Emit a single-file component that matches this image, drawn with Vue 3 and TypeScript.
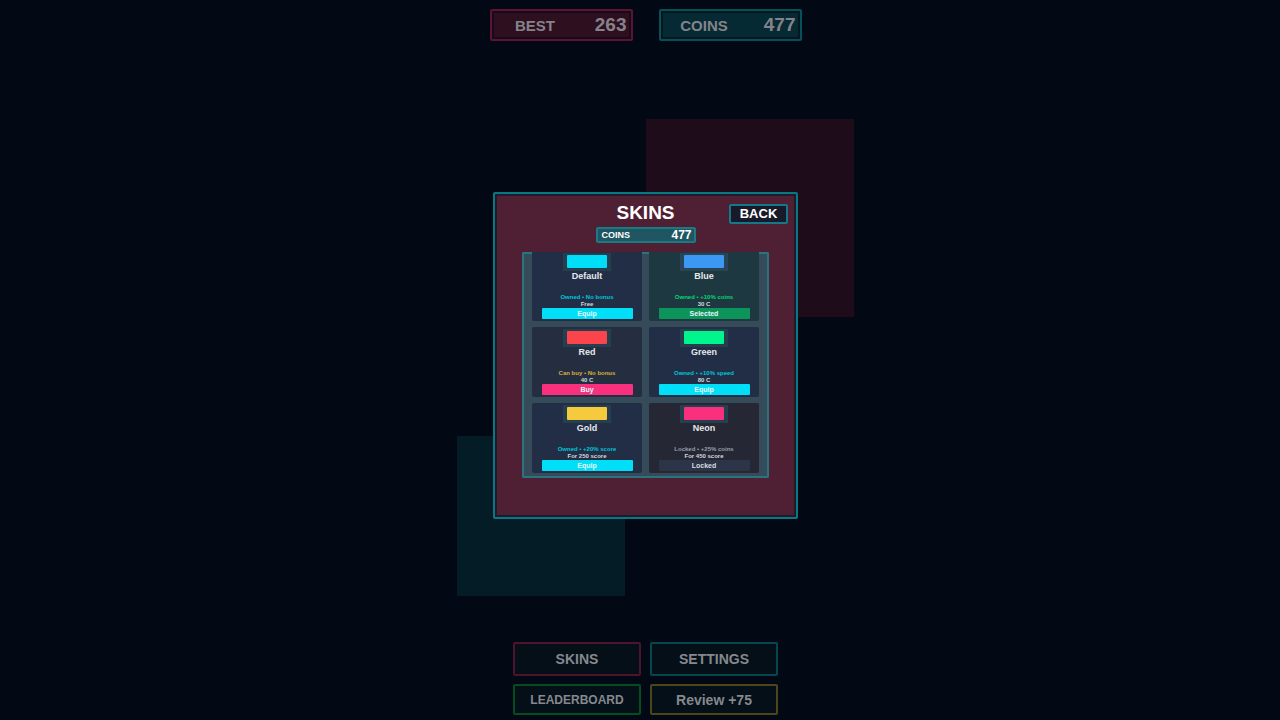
<script setup lang="ts">
interface Skin {
  name: string
  tone: string
  color: string
  status: string
  price: string
  action: string
}

const skins: Skin[] = [
  { name: 'Default', tone: 'owned', color: 'cyan', status: 'Owned • No bonus', price: 'Free', action: 'Equip' },
  { name: 'Blue', tone: 'selected', color: 'blue', status: 'Owned • +10% coins', price: '30 C', action: 'Selected' },
  { name: 'Red', tone: 'buy', color: 'red', status: 'Can buy • No bonus', price: '40 C', action: 'Buy' },
  { name: 'Green', tone: 'owned', color: 'green', status: 'Owned • +10% speed', price: '80 C', action: 'Equip' },
  { name: 'Gold', tone: 'owned', color: 'gold', status: 'Owned • +20% score', price: 'For 250 score', action: 'Equip' },
  { name: 'Neon', tone: 'locked', color: 'neon', status: 'Locked • +25% coins', price: 'For 450 score', action: 'Locked' },
]
</script>

<template>
  <main class="game">
    <div class="block block-pink"></div>
    <div class="block block-teal"></div>

    <header class="stats">
      <div class="stat stat-best"><span>BEST</span><b>263</b></div>
      <div class="stat stat-coins"><span>COINS</span><b>477</b></div>
    </header>

    <nav class="menu">
      <button class="pink">SKINS</button>
      <button class="teal">SETTINGS</button>
      <button class="green">LEADERBOARD</button>
      <button class="yellow">Review +75</button>
    </nav>

    <div class="overlay">
      <section class="panel" role="dialog" aria-labelledby="skins-title">
        <div class="head">
          <h1 id="skins-title">SKINS</h1>
          <button class="back">BACK</button>
        </div>
        <div class="wallet"><span>COINS</span><b>477</b></div>
        <div class="list">
          <div class="cards">
            <article v-for="skin in skins" :key="skin.name" class="card" :class="skin.tone">
              <div class="frame"><i :class="skin.color"></i></div>
              <h2>{{ skin.name }}</h2>
              <p class="status">{{ skin.status }}</p>
              <p class="price">{{ skin.price }}</p>
              <button :disabled="skin.tone === 'locked'">{{ skin.action }}</button>
            </article>
          </div>
        </div>
      </section>
    </div>
  </main>
</template>

<style>
body {
  background: #020914;
}
</style>

<style scoped>
* {
  box-sizing: border-box;
  margin: 0;
}

.game {
  position: relative;
  display: flex;
  flex-direction: column;
  align-items: center;
  justify-content: space-between;
  min-height: 100vh;
  padding: 9px 0 5px 11px;
  overflow: hidden;
  background: #020914;
  color: #fff;
  font-family: "Liberation Sans", Arial, sans-serif;
  font-weight: 700;
}

button {
  padding: 0;
  font-family: inherit;
  font-weight: 700;
  cursor: pointer;
}

.block {
  position: absolute;
}

.block-pink {
  top: 119px;
  left: calc(50% + 6px);
  width: 208px;
  height: 198px;
  background: #1f0c1b;
}

.block-teal {
  top: 436px;
  left: calc(50% - 183px);
  width: 168px;
  height: 160px;
  background: #031c25;
}

.stats {
  display: flex;
  gap: 26px;
}

.stat {
  display: flex;
  align-items: center;
  justify-content: space-between;
  width: 143px;
  height: 32px;
  padding-right: 4px;
  border: 2px solid;
  border-radius: 2px;
  color: #85838a;
}

.stat span {
  width: 87px;
  font-size: 15px;
  text-align: center;
}

.stat b {
  font-size: 19px;
}

.stat-best {
  border-color: #5b1431;
  background: #2e0f20;
  box-shadow: inset 0 0 0 2px #180a1a;
}

.stat-coins {
  border-color: #045159;
  background: #052a33;
  box-shadow: inset 0 0 0 2px #041720;
}

.menu {
  display: grid;
  grid-template-columns: 128px 128px;
  grid-template-rows: 34px 31px;
  gap: 8px 9px;
}

.menu button {
  border: 2px solid;
  border-radius: 2px;
  background: #040f18;
  color: #85898d;
  font-size: 14px;
}

.menu .pink {
  border-color: #4e132d;
}

.menu .teal {
  border-color: #05474f;
}

.menu .green {
  border-color: #054d20;
  font-size: 12px;
}

.menu .yellow {
  border-color: #4d461b;
}

.overlay {
  position: absolute;
  inset: 0;
  display: flex;
  align-items: center;
  justify-content: center;
  padding: 0 0 9px 11px;
}

.panel {
  display: flex;
  flex-direction: column;
  align-items: center;
  width: 305px;
  padding: 10px 8px 39px;
  border: 2px solid #087984;
  border-radius: 2px;
  background: #4f1f33;
  box-shadow: inset 0 0 0 2px #201a2a;
}

.head {
  display: grid;
  grid-template-columns: 1fr auto 1fr;
  align-items: start;
  width: 100%;
  height: 23px;
}

.head h1 {
  grid-column: 2;
  font-size: 19px;
  line-height: 18px;
}

.back {
  justify-self: end;
  width: 59px;
  height: 20px;
  border: 2px solid #117987;
  border-radius: 2px;
  background: #181a2a;
  color: #fff;
  font-size: 13px;
  line-height: 16px;
}

.wallet {
  display: flex;
  align-items: center;
  justify-content: space-between;
  width: 100px;
  height: 16px;
  padding: 0 2px 0 4px;
  border: 2px solid #1a7b86;
  border-radius: 2px;
  background: #205661;
  font-size: 9px;
}

.wallet b {
  font-size: 12px;
}

.list {
  position: relative;
  width: 247px;
  height: 226px;
  margin-top: 9px;
  padding: 0 10px;
  overflow: hidden;
  background: #354b59;
}

.list::before {
  position: absolute;
  inset: 0;
  border: 2px solid #287580;
  border-radius: 2px;
  content: "";
}

.cards {
  position: relative;
  display: grid;
  grid-template-columns: 1fr 1fr;
  gap: 6px 7px;
  margin-top: -1px;
}

.card {
  display: flex;
  flex-direction: column;
  align-items: center;
  height: 70px;
  padding-top: 2px;
  border-radius: 2px;
  background: #212e46;
  text-align: center;
}

.frame {
  width: 48px;
  height: 18px;
  padding: 2px 4px;
  background: #263f4f;
}

.frame i {
  display: block;
  height: 13px;
  border-radius: 1px;
}

.cyan {
  background: #00dff7;
}

.blue {
  background: #3b98f3;
}

.red {
  background: #fb444b;
}

.green {
  background: #00f58c;
}

.gold {
  background: #f5cb3d;
}

.neon {
  background: #f8307e;
}

.card h2 {
  height: 23px;
  color: #e6e8ec;
  font-size: 9px;
  line-height: 10px;
}

.status {
  font-size: 6px;
  line-height: 7px;
  white-space: nowrap;
}

.price {
  color: #d3d8df;
  font-size: 6px;
  line-height: 7px;
}

.card button {
  width: 91px;
  height: 11px;
  border: 0;
  border-radius: 1px;
  color: #e6f8fb;
  font-size: 7px;
  line-height: 11px;
}

.owned .status {
  color: #00c6da;
}

.owned button {
  background: #00dff7;
}

.selected {
  background: #1d3840;
}

.selected .frame {
  background: #294357;
}

.selected .status {
  color: #05d775;
}

.selected button {
  background: #0d945b;
}

.buy {
  background: #252e40;
}

.buy .status {
  color: #d5af3b;
}

.buy button {
  background: #f8307e;
}

.locked {
  background: #252734;
}

.locked .status {
  color: #9a9fa9;
}

.locked button {
  background: #2b3547;
  color: #d9dde3;
}
</style>
